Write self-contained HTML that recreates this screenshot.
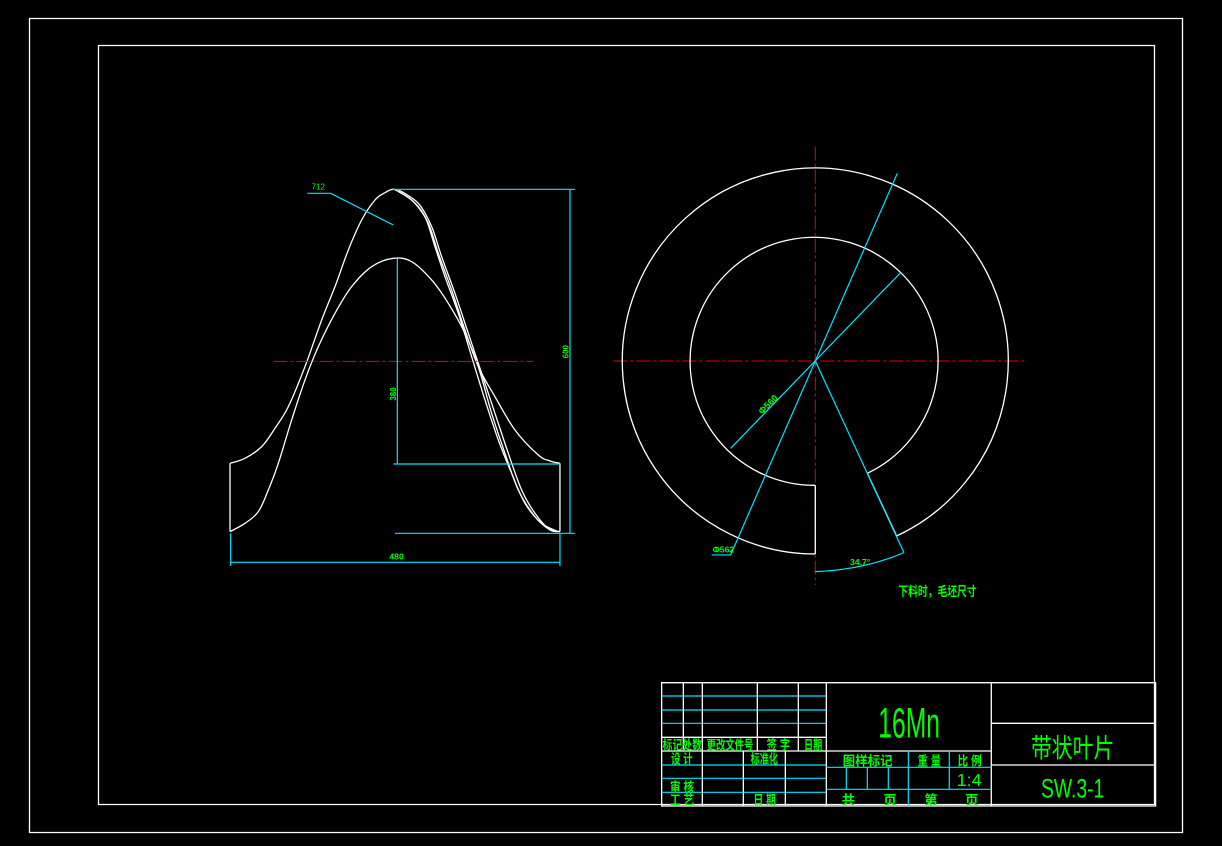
<!DOCTYPE html>
<html><head><meta charset="utf-8"><style>
html,body{margin:0;padding:0;background:#000;width:1222px;height:846px;overflow:hidden}
svg{display:block}
text{font-family:"Liberation Sans","Noto Sans CJK SC",sans-serif;fill:#00ff00}
.tb text{font-weight:bold}
.tb text.n{font-weight:normal}
.w{stroke:#fff;fill:none;stroke-width:1.3;vector-effect:non-scaling-stroke}
.c{stroke:#00e5ff;fill:none;stroke-width:1.2;vector-effect:non-scaling-stroke}
.r{stroke:#e00000;fill:none;stroke-width:1;vector-effect:non-scaling-stroke;stroke-dasharray:14 3 3 3}
</style></head><body>
<svg width="1222" height="846" viewBox="0 0 1222 846" xmlns="http://www.w3.org/2000/svg">
<rect x="0" y="0" width="1222" height="846" fill="#000"/>
<rect x="29.5" y="18.5" width="1153" height="814" class="w"/>
<rect x="98.5" y="45.5" width="1056" height="759" class="w"/>

<g transform="translate(225,180) scale(0.3333)">
<polyline class="w s" points="15,850 60,835 110,800 150,745 190,680 240,560 290,420 330,320 370,210 410,120 450,60 480,38 505,28 530,40 570,70 610,130 640,220 680,330 720,450 760,560 810,650 870,750 940,825 975,843 1005,850"/>
<polyline class="w s" points="15,1055 60,1030 100,995 130,930 160,850 200,720 240,600 280,500 330,400 380,320 440,260 505,235 560,245 620,300 670,370 720,460 760,560 800,700 840,820 880,930 930,1010 975,1050 1005,1055"/>
<polyline class="w s" points="512,30 560,60 600,110 630,200 660,290 700,400 740,530 780,660 820,780 860,880 900,970 950,1030 1000,1055"/>
<polyline class="w s" points="522,30 580,70 620,140 650,230 690,340 730,460 770,580 810,700 850,820 890,930 930,1000 970,1045 1005,1055"/>
<polyline class="w" points="15,850 15,1055"/>
<polyline class="w" points="1005,850 1005,1055"/>
</g>
<g transform="translate(220,170) scale(0.3333)">
<polyline class="r" points="160,574 940,574"/>
<polyline class="c" points="518,58 1065,58"/>
<polyline class="c" points="1050,58 1050,1090"/>
<polyline class="c" points="525,1090 1065,1090"/>
<polyline class="c" points="520,882 1020,882"/>
<polyline class="c" points="532,265 532,882"/>
<polyline class="c" points="32,1177 1020,1177"/>
<polyline class="c" points="32,1090 32,1188"/>
<polyline class="c" points="1020,1090 1020,1188"/>
<polyline class="c" points="262,70 332,70 520,165"/>
<text x="275" y="58" font-size="24">712</text>
<text x="1040" y="590" font-size="24" font-weight="bold" transform="rotate(-90 1030 575)">600</text>
<text x="515" y="705" font-size="24" font-weight="bold" transform="rotate(-90 515 692)">380</text>
<text x="508" y="1168" font-size="26" font-weight="bold">480</text>
</g>

<g transform="translate(610,140) scale(0.3333)">
<polyline class="r" points="10,663 1250,663"/>
<polyline class="r" points="616,20 616,1335"/>
<path class="w" d="M616,1242 A579,579 0 1 1 860,1188"/>
<path class="w" d="M616,1036 A372,372 0 1 1 772,1000"/>
<polyline class="w" points="616,1036 616,1242"/>
<polyline class="w" points="772,1000 860,1188"/>
<polyline class="c" points="862,100 616,663 362,1245 305,1245"/>
<polyline class="c" points="872,398 362,925"/>
<polyline class="c" points="616,663 882,1238"/>
<path class="c" d="M616,1295 Q760,1290 882,1238"/>
<text x="440" y="815" font-size="28" font-weight="bold" transform="rotate(-45 460 800)">Φ560</text>
<text x="308" y="1238" font-size="26" font-weight="bold">Φ562</text>
<text x="720" y="1275" font-size="26" font-weight="bold">34.7°</text>
<text x="865" y="1368" font-size="39" font-weight="bold" textLength="235" lengthAdjust="spacingAndGlyphs">下料时，毛坯尺寸</text>
</g>

<g class="tb" transform="translate(660,680) scale(0.3333)">
<rect x="5" y="8" width="1482" height="370" class="w"/>
<polyline class="c" points="5,48 499,48"/>
<polyline class="c" points="5,90 499,90"/>
<polyline class="c" points="5,130 499,130"/>
<polyline class="w" points="5,172 499,172"/>
<polyline class="w" points="5,213 994,213"/>
<polyline class="c" points="5,255 499,255"/>
<polyline class="c" points="5,295 499,295"/>
<polyline class="c" points="5,337 499,337"/>
<polyline class="w" points="70,8 70,213"/>
<polyline class="w" points="127,8 127,378"/>
<polyline class="w" points="292,8 292,213"/>
<polyline class="w" points="415,8 415,213"/>
<polyline class="w" points="250,213 250,378"/>
<polyline class="w" points="376,213 376,378"/>
<polyline class="w" points="499,8 499,378"/>
<polyline class="w" points="994,8 994,378"/>
<polyline class="c" points="499,262 994,262"/>
<polyline class="c" points="499,328 994,328"/>
<polyline class="c" points="745,213 745,378"/>
<polyline class="c" points="868,213 868,328"/>
<polyline class="c" points="559,262 559,328"/>
<polyline class="c" points="622,262 622,328"/>
<polyline class="c" points="685,262 685,328"/>
<polyline class="w" points="994,130 1487,130"/>
<polyline class="w" points="994,255 1487,255"/>
<text class="n" x="655" y="172" font-size="128" textLength="185" lengthAdjust="spacingAndGlyphs">16Mn</text>
<text class="n" x="1113" y="232" font-size="80" textLength="250" lengthAdjust="spacingAndGlyphs">带状叶片</text>
<text class="n" x="1143" y="352" font-size="80" textLength="190" lengthAdjust="spacingAndGlyphs">SW.3-1</text>
<text class="n" x="890" y="318" font-size="54">1:4</text>
<text x="8" y="208" font-size="40" textLength="118" lengthAdjust="spacingAndGlyphs">标记处数</text>
<text x="140" y="208" font-size="40" textLength="140" lengthAdjust="spacingAndGlyphs">更改文件号</text>
<text x="320" y="208" font-size="40" textLength="70" lengthAdjust="spacingAndGlyphs">签 字</text>
<text x="432" y="208" font-size="40" textLength="55" lengthAdjust="spacingAndGlyphs">日期</text>
<text x="33" y="250" font-size="40" textLength="65" lengthAdjust="spacingAndGlyphs">设 计</text>
<text x="272" y="250" font-size="40" textLength="82" lengthAdjust="spacingAndGlyphs">标准化</text>
<text x="30" y="334" font-size="40" textLength="72" lengthAdjust="spacingAndGlyphs">审 核</text>
<text x="30" y="374" font-size="40" textLength="72" lengthAdjust="spacingAndGlyphs">工 艺</text>
<text x="280" y="374" font-size="40" textLength="68" lengthAdjust="spacingAndGlyphs">日 期</text>
<text x="548" y="256" font-size="40" textLength="150" lengthAdjust="spacingAndGlyphs">图样标记</text>
<text x="773" y="256" font-size="40" textLength="70" lengthAdjust="spacingAndGlyphs">重 量</text>
<text x="893" y="256" font-size="40" textLength="72" lengthAdjust="spacingAndGlyphs">比 例</text>
<text x="545" y="374" font-size="40">共</text>
<text x="670" y="374" font-size="40">页</text>
<text x="793" y="374" font-size="40">第</text>
<text x="915" y="374" font-size="40">页</text>
</g>
</svg>
<script>
document.querySelectorAll('polyline.s').forEach(function(pl){
  var p=pl.getAttribute('points').trim().split(/\s+/).map(function(s){return s.split(',').map(Number)});
  var d='M'+p[0][0]+','+p[0][1];
  for(var i=0;i<p.length-1;i++){
    var p0=p[i-1]||p[i],p1=p[i],p2=p[i+1],p3=p[i+2]||p2;
    var c1x=p1[0]+(p2[0]-p0[0])/6,c1y=p1[1]+(p2[1]-p0[1])/6;
    var c2x=p2[0]-(p3[0]-p1[0])/6,c2y=p2[1]-(p3[1]-p1[1])/6;
    d+=' C'+c1x+','+c1y+' '+c2x+','+c2y+' '+p2[0]+','+p2[1];
  }
  var path=document.createElementNS('http://www.w3.org/2000/svg','path');
  path.setAttribute('d',d);path.setAttribute('class','w');
  pl.parentNode.replaceChild(path,pl);
});
</script>
</body></html>
